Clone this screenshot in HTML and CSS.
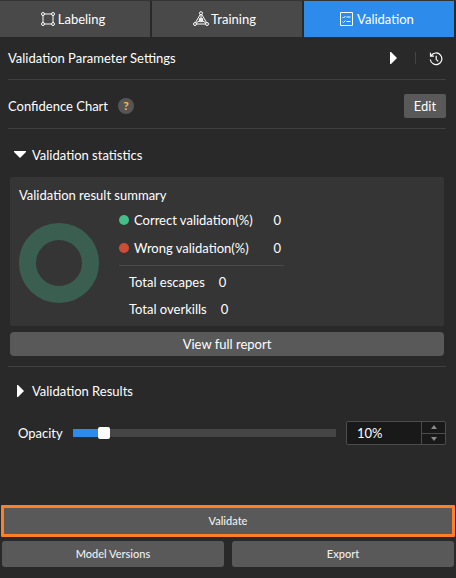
FILE: index.html
```html
<!DOCTYPE html>
<html lang="en">
<head>
<meta charset="utf-8">
<title>Validation</title>
<link rel="stylesheet" href="styles.css">
</head>
<body>
<main class="panel">
  <nav class="tabs" aria-label="Stages">
    <button class="tab" type="button">
      <svg class="tab-icon" viewBox="0 0 16 16" aria-hidden="true"><path d="M4 3h8M4 13h8M3 4v8M13 4v8"/><circle cx="3" cy="3" r="1.500"/><circle cx="13" cy="3" r="1.500"/><circle cx="3" cy="13" r="1.500"/><circle cx="13" cy="13" r="1.500"/></svg>
      Labeling
    </button>
    <button class="tab" type="button">
      <svg class="tab-icon" viewBox="0 0 16 16" aria-hidden="true"><path d="M7.300 3.400 2.600 11.300M8.700 3.400l4.700 7.900M3.500 13h9M8 3.500v4M3.300 11.800l3.500-2M12.700 11.800l-3.500-2M6 7.500 10 10.500M10 7.500 6 10.500"/><circle cx="8" cy="2.200" r="1.500"/><circle cx="8" cy="9" r="1.800"/><circle cx="2" cy="13" r="1.500"/><circle cx="14" cy="13" r="1.500"/></svg>
      Training
    </button>
    <button class="tab active" type="button" aria-current="page">
      <svg class="tab-icon" viewBox="0 0 16 16" aria-hidden="true"><path d="M1.500 1.500h12v13h-12zM3.500 6l1 1 2-2M7.500 6h4M3.500 10.500l1 1 2-2M7.500 10.500h4"/></svg>
      Validation
    </button>
  </nav>

  <div class="content">
    <section class="row">
      <h2 class="title">Validation Parameter Settings</h2>
      <div class="tools">
        <button class="icon-button" type="button" aria-label="Expand settings"><svg class="arrow" viewBox="0 0 12 12" aria-hidden="true"><path d="M2 0h1l6 6-6 6H2z"/></svg></button>
        <button class="icon-button history" type="button" aria-label="History"><svg class="clock" viewBox="0 0 14 14" aria-hidden="true"><path d="M2.200 3.600A5.800 5.800 0 1 1 1.300 7.500M1.500.8v3.400h3.400M7.200 3.800v3.500l2 2"/></svg></button>
      </div>
    </section>

    <section class="row">
      <h2 class="title">Confidence Chart</h2>
      <button class="help" type="button" aria-label="Help">?</button>
      <button class="button edit" type="button">Edit</button>
    </section>

    <section class="statistics">
      <h2 class="title group"><svg class="arrow" viewBox="0 0 12 12" aria-hidden="true"><path d="M0 3v-1h12v1L6 9z"/></svg>Validation statistics</h2>
      <div class="card">
        <h3 class="title">Validation result summary</h3>
        <div class="summary">
          <svg class="ring" viewBox="0 0 80 80" aria-hidden="true"><circle cx="40" cy="40" r="31.500"/></svg>
          <div class="figures">
            <dl class="rates">
              <div class="rate"><dt class="correct">Correct validation(%)</dt><dd>0</dd></div>
              <div class="rate"><dt class="wrong">Wrong validation(%)</dt><dd>0</dd></div>
            </dl>
            <dl class="totals">
              <div class="total"><dt>Total escapes</dt><dd>0</dd></div>
              <div class="total"><dt>Total overkills</dt><dd>0</dd></div>
            </dl>
          </div>
        </div>
      </div>
      <button class="button report" type="button">View full report</button>
    </section>

    <section class="results">
      <h2 class="title group"><svg class="arrow" viewBox="0 0 12 12" aria-hidden="true"><path d="M3 0h1l6 6-6 6H3z"/></svg>Validation Results</h2>
      <div class="opacity">
        <label for="opacity">Opacity</label>
        <input class="slider" id="opacity" type="range" min="0" max="100" value="10">
        <div class="spin">
          <input class="spin-value" type="text" value="10%" aria-label="Opacity value">
          <div class="steps">
            <button class="step" type="button" aria-label="Increase"><svg class="step-icon" viewBox="0 0 6 4" aria-hidden="true"><path d="M3 0l3 4H0z"/></svg></button>
            <button class="step" type="button" aria-label="Decrease"><svg class="step-icon" viewBox="0 0 6 4" aria-hidden="true"><path d="M3 4l3-4H0z"/></svg></button>
          </div>
        </div>
      </div>
    </section>
  </div>

  <footer class="actions">
    <button class="action validate" type="button">Validate</button>
    <button class="action" type="button">Model Versions</button>
    <button class="action" type="button">Export</button>
  </footer>
</main>
</body>
</html>
```
FILE: styles.css
```css
* { box-sizing: border-box; }

body {
  margin: 0;
  background: #292929;
  color: #fff;
  font: 13px/20px Lato, "Noto Sans", sans-serif;
}

button, input { font: inherit; color: inherit; }
button { padding: 0; border: 0; background: none; }
h2, h3, dl, dd { margin: 0; }
svg { display: block; flex: none; fill: none; stroke: currentColor; }

.panel {
  display: flex;
  flex-direction: column;
  min-height: 100vh;
  border-top: 1px solid #333;
}

.tabs {
  display: grid;
  grid-template-columns: repeat(3, 1fr);
  gap: 2px;
  padding-right: 2px;
}
.tab {
  display: flex;
  align-items: center;
  justify-content: center;
  gap: 2px;
  height: 36px;
  padding-right: 5px;
  background: #494949;
}
.tab.active { background: #2d8ceb; }
.tab-icon { width: 16px; height: 16px; }

.content { padding: 0 10px 0 8px; }
.title { font-size: 13px; font-weight: 400; line-height: 20px; }

.row {
  display: flex;
  align-items: center;
  border-bottom: 1px solid #404040;
}
.row:first-child { height: 43px; }
.row:nth-child(2) { height: 49px; padding-top: 4px; }

.tools { display: flex; margin-left: auto; }
.icon-button { display: grid; place-items: center; width: 26px; height: 12px; }
.history { width: 31px; padding-left: 10px; border-left: 1px solid #444; }
.tools .icon-button:first-child { margin-right: 8px; }
.arrow { width: 12px; height: 12px; fill: #fff; stroke: none; }
.clock { width: 14px; height: 14px; stroke-width: 1.2px; }

.help {
  width: 16px;
  height: 16px;
  margin-left: 10px;
  border-radius: 50%;
  background: #555;
  color: #f0bf50;
  font-size: 12px;
  font-weight: 700;
  line-height: 16px;
}
.button { height: 24px; border-radius: 3px; background: #595959; }
.edit { width: 42px; margin-left: auto; border-radius: 2px; }

.statistics { padding-top: 16px; border-bottom: 1px solid #404040; }
.group { display: flex; align-items: center; gap: 6px; padding-left: 6px; }
.card {
  margin: 12px 2px 6px;
  padding: 8px 9px 4px;
  border-radius: 2px;
  background: #353535;
}
.summary { display: flex; gap: 20px; }
.ring { width: 80px; height: 80px; margin-top: 18px; stroke: #3a5f50; stroke-width: 17px; }
.figures { width: 165px; padding-top: 1px; }
.rates { padding-bottom: 3px; border-bottom: 1px solid #4a4a4a; }
.rate { display: flex; align-items: center; height: 28px; padding-right: 3px; }
.rate dd { margin-left: auto; }
.rate dt { display: flex; align-items: center; gap: 5px; }
.rate dt::before { width: 10px; height: 10px; border-radius: 50%; background: #43bd89; content: ""; }
.rate .wrong::before { background: #cb4d35; }
.totals { padding: 2px 0 0 10px; }
.total { display: flex; align-items: center; gap: 14px; height: 27px; }
.report { display: block; width: calc(100% - 4px); margin: 0 2px 10px; border-radius: 4px; }

.results { padding-top: 14px; }
.opacity { display: flex; align-items: center; gap: 10px; margin-top: 20px; padding-left: 10px; }
.slider {
  flex: 1;
  min-width: 0;
  height: 12px;
  margin: 0;
  appearance: none;
  background: linear-gradient(#2d8ceb, #2d8ceb) 0 50% / 12% 8px no-repeat, linear-gradient(#454545, #454545) 0 50% / 100% 8px no-repeat;
}
.slider::-webkit-slider-thumb {
  width: 12px;
  height: 12px;
  border-radius: 2px;
  appearance: none;
  background: #fff;
}
.spin {
  display: flex;
  width: 100px;
  height: 24px;
  border: 1px solid #4c4c4c;
  border-radius: 2px;
  background: #191919;
}
.spin-value { flex: 1; min-width: 0; padding: 0 10px; border: 0; background: none; }
.steps { display: grid; width: 24px; border-left: 1px solid #4c4c4c; }
.step { display: grid; place-items: center; }
.step + .step { border-top: 1px solid #4c4c4c; }
.step-icon { width: 6px; height: 4px; fill: #8a8a8a; stroke: none; }

.actions {
  display: grid;
  grid-template-columns: 1fr 1fr;
  gap: 4px 8px;
  margin-top: auto;
  padding: 0 2px 11px;
}
.action {
  height: 26px;
  border-radius: 3px;
  background: #595959;
  color: #eee;
  font-size: 11px;
  font-weight: 500;
}
.validate {
  grid-column: 1 / -1;
  height: 32px;
  margin: 0 -1px;
  border: 3px solid #ff7f27;
  border-radius: 1px;
}
```
